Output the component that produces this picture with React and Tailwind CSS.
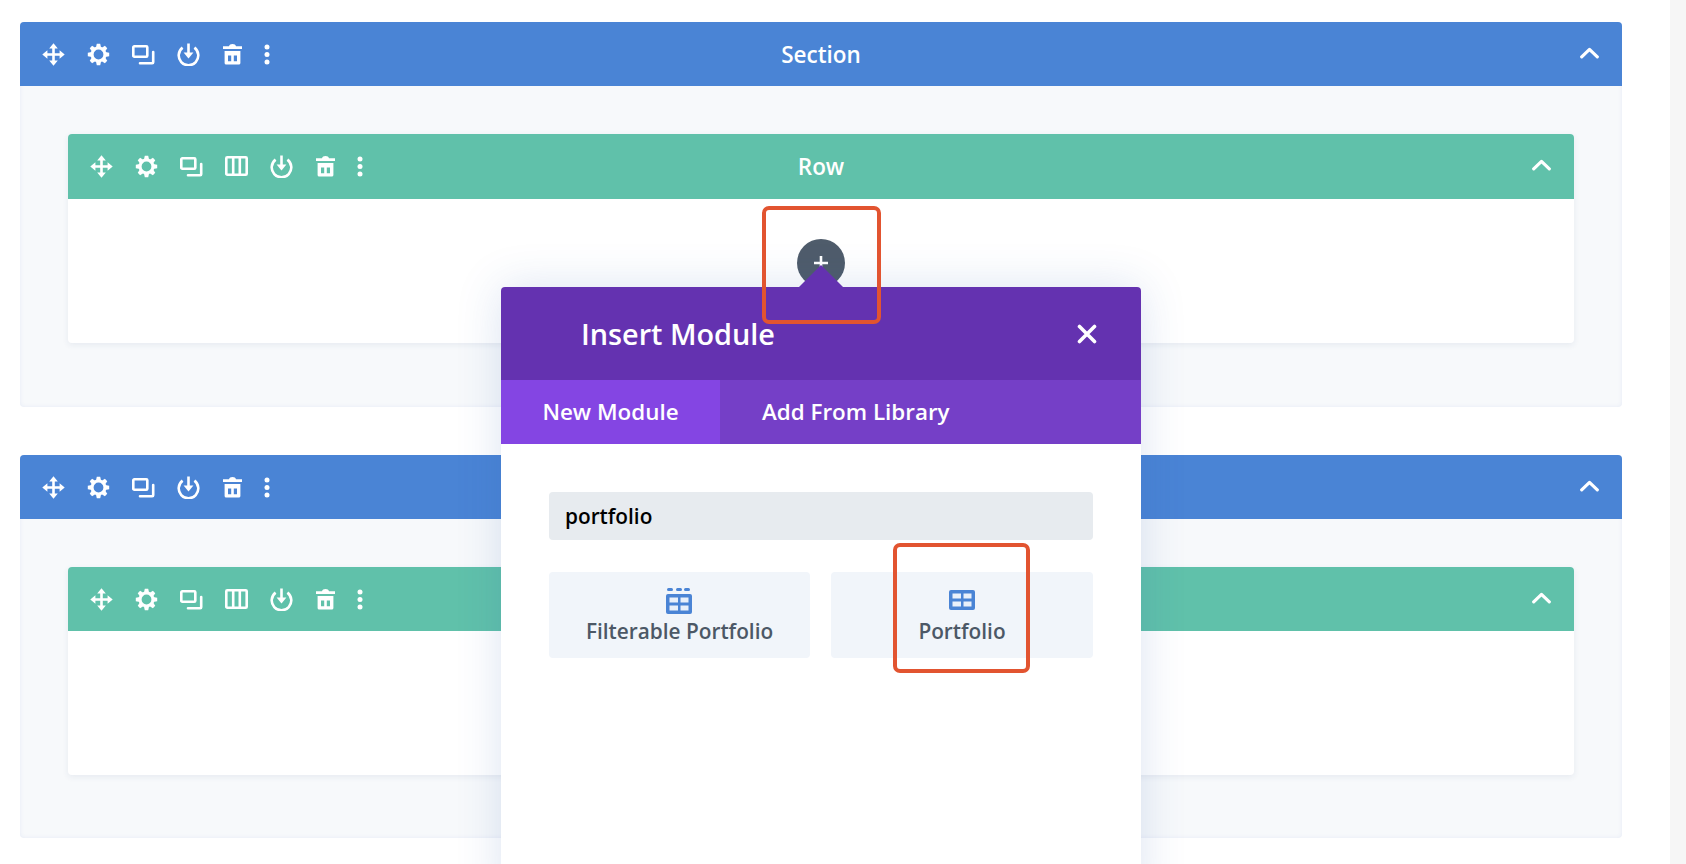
import React from 'react';

const MoveIcon = () => (
  <svg width="23" height="23" viewBox="0 0 23 23" fill="white" className="shrink-0">
    <path d="M4 11.5h15M11.5 4v15" stroke="white" strokeWidth="2.6" fill="none" />
    <path d="M0.3 11.5 5.4 7.2v8.6zM22.7 11.5 17.6 7.2v8.6zM11.5 0.3 7.2 5.4h8.6zM11.5 22.7 7.2 17.6h8.6z" />
  </svg>
);

const GearIcon = () => (
  <svg width="23" height="23" viewBox="0 0 23 23" fill="white" className="shrink-0">
    <circle cx="11.5" cy="11.5" r="6.4" fill="none" stroke="white" strokeWidth="3" />
    {[0, 45, 90, 135, 180, 225, 270, 315].map((deg) => (
      <path key={deg} d="M9.8 0.8h3.4l0.9 4h-5.2z" transform={`rotate(${deg} 11.5 11.5)`} />
    ))}
  </svg>
);

const DuplicateIcon = () => (
  <svg width="23" height="23" viewBox="0 0 23 23" fill="none" stroke="white" strokeWidth="2.6" className="shrink-0">
    <rect x="1.3" y="3.3" width="14" height="10.4" rx="1" />
    <path d="M8 20.3h12.2a1 1 0 0 0 1-1V9" strokeLinecap="round" />
  </svg>
);

const ColumnsIcon = () => (
  <svg width="23" height="23" viewBox="0 0 23 23" fill="none" stroke="white" strokeWidth="2.6" className="shrink-0">
    <rect x="1.3" y="2.3" width="20.4" height="17.4" rx="1" />
    <path d="M8.2 3v16M14.8 3v16" />
  </svg>
);

const DownloadIcon = () => (
  <svg width="23" height="23" viewBox="0 0 23 23" fill="none" stroke="white" strokeWidth="2.6" className="shrink-0">
    <path d="M5.6 4.6a9.8 9.8 0 1 0 11.8 0" />
    <path d="M11.5 0.5v11" />
    <path d="M6.6 9.4h9.8l-4.9 6z" fill="white" stroke="none" />
  </svg>
);

const TrashIcon = () => (
  <svg width="23" height="23" viewBox="0 0 23 23" fill="white" className="shrink-0">
    <path d="M7 3.2C7.4 1.7 8.6 1 10.5 1s3.1 0.7 3.5 2.2h6v2.8H1V3.2z" />
    <path fillRule="evenodd" d="M2.6 8h15.8v12a1.6 1.6 0 0 1-1.6 1.6H4.2A1.6 1.6 0 0 1 2.6 20zM6 12.6v5.6h3.2v-5.6zm5.8 0v5.6H15v-5.6z" />
  </svg>
);

const DotsIcon = () => (
  <svg width="6" height="23" viewBox="0 0 6 23" fill="white" className="-ml-[3px] shrink-0">
    <circle cx="3" cy="4" r="2.5" />
    <circle cx="3" cy="11.5" r="2.5" />
    <circle cx="3" cy="19" r="2.5" />
  </svg>
);

const ChevronUp = () => (
  <svg width="19" height="12" viewBox="0 0 19 12" fill="none" stroke="white" strokeWidth="3.2" strokeLinecap="round" strokeLinejoin="round" className="-mt-[3px]">
    <path d="M1.7 9.8 9.5 2.4 17.3 9.8" />
  </svg>
);

const FilterableIcon = () => (
  <svg width="26" height="26" viewBox="0 0 26 26" className="-ml-[2px]">
    <rect x="1" y="0" width="6" height="3" rx="1.5" fill="#4a84d5" />
    <rect x="10" y="0" width="6" height="3" rx="1.5" fill="#4a84d5" />
    <rect x="18" y="0" width="6" height="3" rx="1.5" fill="#4a84d5" />
    <rect x="0" y="6" width="26" height="20" rx="2" fill="#4a84d5" />
    <rect x="3.5" y="9.5" width="8.5" height="5" fill="#e9f0fa" />
    <rect x="14.5" y="9.5" width="8" height="5" fill="#e9f0fa" />
    <rect x="3.5" y="17.5" width="8.5" height="5" fill="#e9f0fa" />
    <rect x="14.5" y="17.5" width="8" height="5" fill="#e9f0fa" />
  </svg>
);

const PortfolioIcon = () => (
  <svg width="26" height="20" viewBox="0 0 26 20">
    <rect x="0" y="0" width="26" height="20" rx="2" fill="#4a84d5" />
    <rect x="3.5" y="3.5" width="8.5" height="5" fill="#e9f0fa" />
    <rect x="14.5" y="3.5" width="8" height="5" fill="#e9f0fa" />
    <rect x="3.5" y="11.5" width="8.5" height="5" fill="#e9f0fa" />
    <rect x="14.5" y="11.5" width="8" height="5" fill="#e9f0fa" />
  </svg>
);

const sectionTools = [MoveIcon, GearIcon, DuplicateIcon, DownloadIcon, TrashIcon, DotsIcon];
const rowTools = [MoveIcon, GearIcon, DuplicateIcon, ColumnsIcon, DownloadIcon, TrashIcon, DotsIcon];

const BarHeader = ({ tools, title, className }) => (
  <div className={`grid grid-cols-[1fr_auto_1fr] items-center rounded-t-[4px] px-[22px] text-white ${className}`}>
    <div className="flex items-center gap-[22px]">
      {tools.map((Icon, index) => (
        <Icon key={index} />
      ))}
    </div>
    <span className="mt-[2px] text-[22.5px] leading-none font-semibold">{title}</span>
    <div className="flex justify-end pr-[1px]">
      <ChevronUp />
    </div>
  </div>
);

const Section = ({ title, rowTitle, heightClass, rowHeaderClass, rowBodyClass }) => (
  <div className={`rounded-[4px] bg-[#f7f9fb] shadow-[inset_0_0_4px_rgba(80,110,200,0.1)] ${heightClass}`}>
    <BarHeader tools={sectionTools} title={title} className="h-[64px] bg-[#4a84d5]" />
    <div className="px-[48px] pt-[48px]">
      <div className="rounded-[4px] bg-white shadow-[0_2px_6px_rgba(43,70,120,0.08)]">
        <BarHeader tools={rowTools} title={rowTitle} className={`bg-[#60c1aa] ${rowHeaderClass}`} />
        <div className={rowBodyClass}></div>
      </div>
    </div>
  </div>
);

const App = () => {
  return (
    <div className="relative flex h-[864px] overflow-hidden bg-white font-['Open_Sans',sans-serif]">
      <div className="flex-1 pt-[22px] pr-[48px] pl-[20px]">
        <Section title="Section" rowTitle="Row" heightClass="h-[385px]" rowHeaderClass="h-[65px]" rowBodyClass="h-[144px]" />
        <div className="mt-[48px]">
          <Section title="" rowTitle="" heightClass="h-[383px]" rowHeaderClass="h-[64px]" rowBodyClass="h-[144px]" />
        </div>
      </div>
      <div className="w-[16px] shrink-0 bg-[#f6f6f6]"></div>

      {/* Add button */}
      <div className="absolute top-[239px] left-[797px] flex h-[48px] w-[48px] items-center justify-center rounded-full bg-[#4f5c6b]">
        <svg width="16" height="16" viewBox="0 0 16 16" stroke="white" strokeWidth="2.6">
          <path d="M8 1v14M1 8h14" />
        </svg>
      </div>

      {/* Insert Module popup */}
      <div className="absolute top-[287px] left-[501px] h-[620px] w-[640px] rounded-t-[4px] bg-white shadow-[0_0_45px_rgba(43,87,170,0.17)]">
        <svg width="44" height="22" viewBox="0 0 44 22" className="absolute top-[-22px] left-[298px]" fill="#6432b0">
          <path d="M22 0 44 22H0z" />
        </svg>
        <div className="flex h-[93px] items-center justify-between rounded-t-[4px] bg-[#6432b0] pr-[44px] pl-[80px] text-white">
          <h2 className="mt-[2px] text-[28.8px] leading-none font-semibold">Insert Module</h2>
          <svg width="20" height="20" viewBox="0 0 20 20" stroke="white" strokeWidth="3.6" strokeLinecap="round">
            <path d="M2.5 2.5 17.5 17.5M17.5 2.5 2.5 17.5" />
          </svg>
        </div>
        <div className="flex h-[64px] bg-[#753fc7] text-[22.4px] font-semibold text-white">
          <div className="flex w-[219px] items-center justify-center bg-[#8445e3]">New Module</div>
          <div className="flex items-center pl-[42px]">Add From Library</div>
        </div>
        <div className="px-[48px] pt-[48px]">
          <div className="flex h-[48px] items-center rounded-[4px] bg-[#e7ebef] px-[16px] pt-[2px] text-[20.8px] font-semibold text-black">
            portfolio
          </div>
          <div className="mt-[32px] grid grid-cols-[261px_1fr] gap-[21px]">
            <div className="flex h-[86px] flex-col items-center rounded-[4px] bg-[#f1f5fa] pt-[16px] text-[20.8px] leading-[27px] font-semibold text-[#4c5866]">
              <FilterableIcon />
              <span className="mt-[4px]">Filterable Portfolio</span>
            </div>
            <div className="flex h-[86px] flex-col items-center rounded-[4px] bg-[#f1f5fa] pt-[18px] text-[20.8px] leading-[27px] font-semibold text-[#4c5866]">
              <PortfolioIcon />
              <span className="mt-[8px]">Portfolio</span>
            </div>
          </div>
        </div>
      </div>

      {/* Red callouts */}
      <div className="absolute top-[206px] left-[762px] h-[118px] w-[119px] rounded-[7px] border-[4px] border-[#e25430]"></div>
      <div className="absolute top-[543px] left-[893px] h-[130px] w-[137px] rounded-[7px] border-[4px] border-[#e25430]"></div>
    </div>
  );
};

export default App;
